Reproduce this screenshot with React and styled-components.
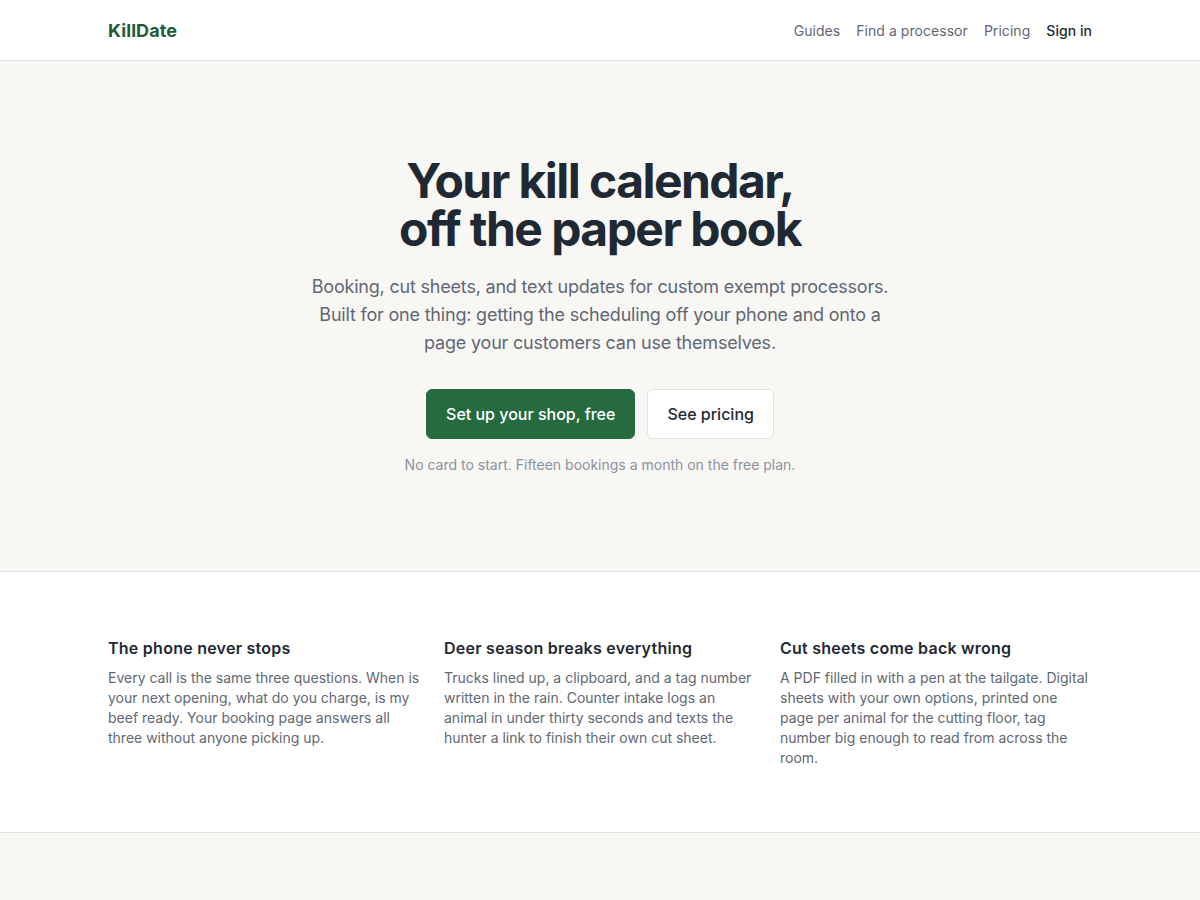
import React from "react";
import styled, { createGlobalStyle } from "styled-components";

const GlobalStyle = createGlobalStyle`
  * { box-sizing: border-box; }
  body {
    margin: 0;
    font-family: Inter, "Noto Sans", sans-serif;
    background: #ffffff;
    color: #1f2933;
    -webkit-font-smoothing: antialiased;
  }
`;

const features = [
  {
    title: "The phone never stops",
    body: "Every call is the same three questions. When is your next opening, what do you charge, is my beef ready. Your booking page answers all three without anyone picking up.",
  },
  {
    title: "Deer season breaks everything",
    body: "Trucks lined up, a clipboard, and a tag number written in the rain. Counter intake logs an animal in under thirty seconds and texts the hunter a link to finish their own cut sheet.",
  },
  {
    title: "Cut sheets come back wrong",
    body: "A PDF filled in with a pen at the tailgate. Digital sheets with your own options, printed one page per animal for the cutting floor, tag number big enough to read from across the room.",
  },
];

const App = () => {
  return (
    <>
      <GlobalStyle />
      <Header>
        <Inner>
          <HeaderRow>
            <Logo href="#">KillDate</Logo>
            <Nav>
              <NavLink href="#">Guides</NavLink>
              <NavLink href="#">Find a processor</NavLink>
              <NavLink href="#">Pricing</NavLink>
              <NavLink href="#" $strong>
                Sign in
              </NavLink>
            </Nav>
          </HeaderRow>
        </Inner>
      </Header>

      <Hero>
        <Inner>
          <HeroContent>
            <Title>
              <TitleLine>Your kill calendar,</TitleLine>
              <TitleLine>off the paper book</TitleLine>
            </Title>
            <Lead>
              Booking, cut sheets, and text updates for custom exempt
              processors. Built for one thing: getting the scheduling off your
              phone and onto a page your customers can use themselves.
            </Lead>
            <Actions>
              <Button href="#" $primary>
                Set up your shop, free
              </Button>
              <Button href="#">See pricing</Button>
            </Actions>
            <Note>No card to start. Fifteen bookings a month on the free plan.</Note>
          </HeroContent>
        </Inner>
      </Hero>

      <Features>
        <Inner>
          <Grid>
            {features.map((f) => (
              <Feature key={f.title}>
                <FeatureTitle>{f.title}</FeatureTitle>
                <FeatureBody>{f.body}</FeatureBody>
              </Feature>
            ))}
          </Grid>
        </Inner>
      </Features>

      <NextSection />
    </>
  );
};

export default App;

const Inner = styled.div`
  max-width: 984px;
  margin: 0 auto;
`;

const Header = styled.header`
  background: #ffffff;
  border-bottom: 1px solid #e6e3de;
`;

const HeaderRow = styled.div`
  height: 60px;
  display: flex;
  align-items: center;
  justify-content: space-between;
`;

const Logo = styled.a`
  font-size: 18px;
  font-weight: 700;
  color: #1f5b39;
  text-decoration: none;
  letter-spacing: 0.1px;
`;

const Nav = styled.nav`
  display: flex;
  align-items: center;
  gap: 16px;
`;

const NavLink = styled.a`
  font-size: 14px;
  text-decoration: none;
  letter-spacing: 0.05px;
  color: ${(p) => (p.$strong ? "#1f2933" : "#5f6874")};
  font-weight: ${(p) => (p.$strong ? 500 : 400)};
`;

const Hero = styled.section`
  background: #f8f7f4;
  padding: 96px 0;
`;

const HeroContent = styled.div`
  display: flex;
  flex-direction: column;
  align-items: center;
  text-align: center;
`;

const Title = styled.h1`
  margin: 0;
  display: flex;
  flex-direction: column;
  font-size: 48px;
  font-weight: 700;
  letter-spacing: -1.55px;
  color: #1f2933;
`;

const TitleLine = styled.span`
  display: block;
  height: 48px;
  line-height: 48px;
`;

const Lead = styled.p`
  margin: 20px 0 0;
  max-width: 582px;
  font-size: 18px;
  line-height: 28px;
  letter-spacing: -0.2px;
  color: #5f6874;
`;

const Actions = styled.div`
  margin-top: 32px;
  display: flex;
  gap: 12px;
`;

const Button = styled.a`
  display: inline-flex;
  align-items: center;
  justify-content: center;
  height: 50px;
  padding: 0 19px;
  border-radius: 6px;
  font-size: 16px;
  font-weight: 500;
  text-decoration: none;
  background: ${(p) => (p.$primary ? "#256b3f" : "#ffffff")};
  color: ${(p) => (p.$primary ? "#ffffff" : "#1f2933")};
  border: 1px solid ${(p) => (p.$primary ? "#256b3f" : "#e4e2dd")};
`;

const Note = styled.p`
  margin: 16px 0 0;
  font-size: 14px;
  line-height: 20px;
  color: #8a939e;
`;

const Features = styled.section`
  background: #ffffff;
  border-top: 1px solid #e6e3de;
  border-bottom: 1px solid #e6e3de;
  padding: 64px 0;
`;

const Grid = styled.div`
  display: grid;
  grid-template-columns: repeat(3, 1fr);
  gap: 24px;
`;

const Feature = styled.div`
  display: flex;
  flex-direction: column;
  gap: 8px;
`;

const FeatureTitle = styled.h3`
  margin: 0;
  font-size: 16px;
  line-height: 24px;
  font-weight: 600;
  letter-spacing: 0.25px;
  color: #1f2933;
`;

const FeatureBody = styled.p`
  margin: 0;
  font-size: 14px;
  line-height: 20px;
  color: #5f6874;
`;

const NextSection = styled.section`
  background: #f9f7f4;
  height: 200px;
`;
